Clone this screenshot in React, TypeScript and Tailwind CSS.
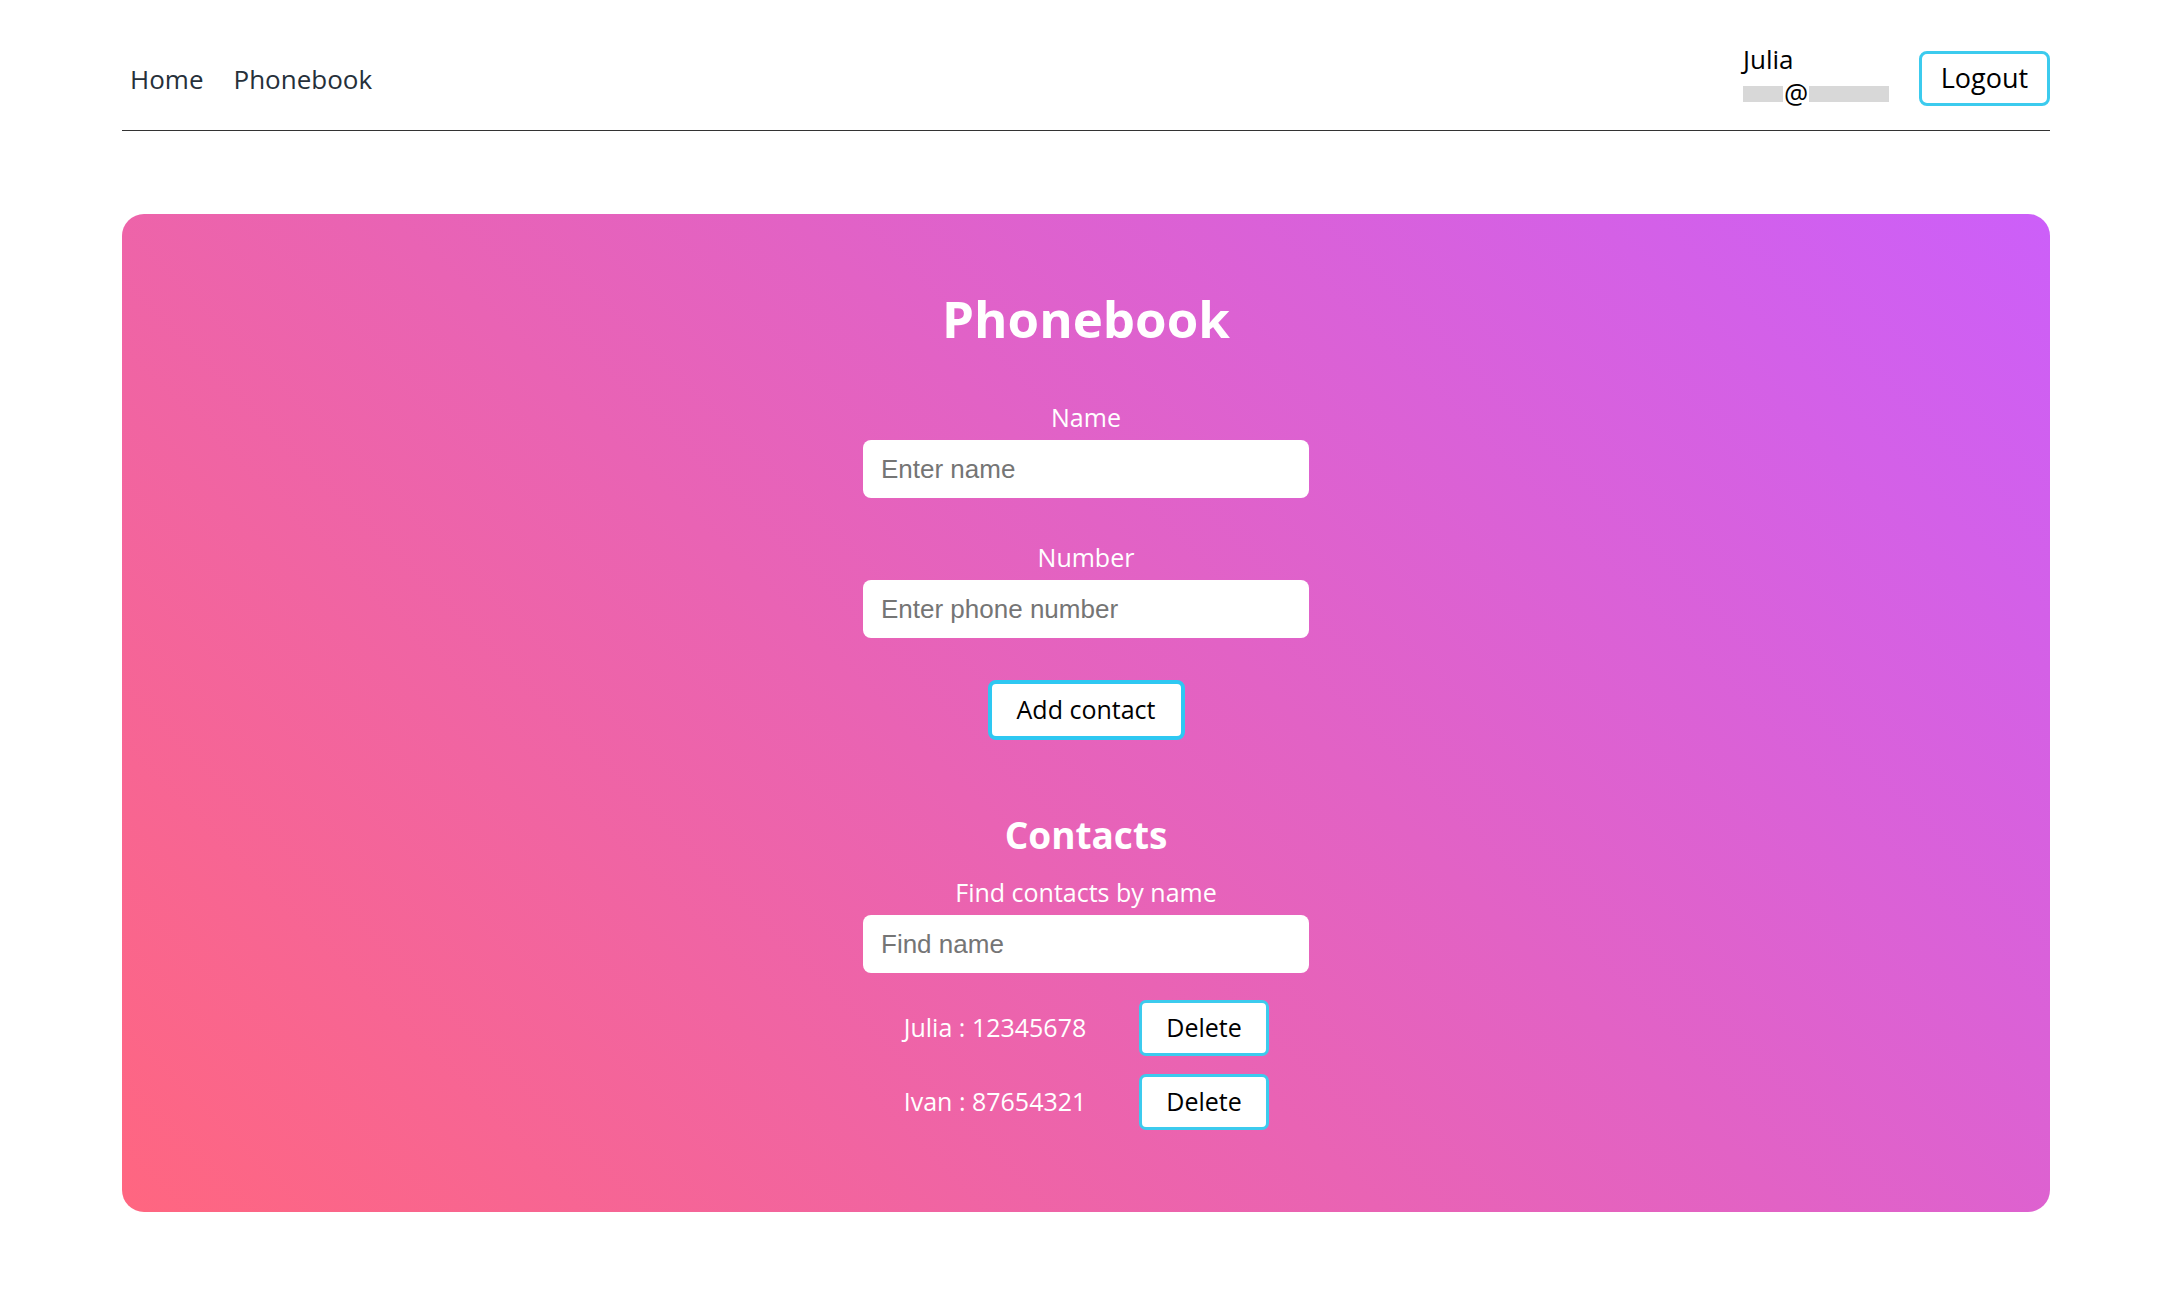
import React from "react";

const sans = { fontFamily: '"Open Sans", "Noto Sans", sans-serif' };
const arial = { fontFamily: '"Liberation Sans", Arial, sans-serif' };

export default function App() {
  const contacts = [
    { name: "Julia", number: "12345678" },
    { name: "Ivan", number: "87654321" },
  ];
  return (
    <div className="min-h-[1307px] bg-white" style={sans}>
      <div className="ml-[122px] w-[1928px]">
        <header className="flex h-[131px] items-center justify-between border-b border-[#333333] pt-[27px]">
          <nav className="flex items-center gap-[30px] pl-[8px] text-[26px] leading-none text-[#26303a]">
            <a className="font-normal">Home</a>
            <a className="font-normal">Phonebook</a>
          </nav>
          <div className="flex items-center gap-[26px]">
            <div className="flex w-[150px] flex-col text-[26px] leading-[32px] text-black">
              <span className="-mt-[6px]">Julia</span>
              <span className="mt-[5px] flex items-center">
                <span className="inline-block h-[16px] w-[40px] bg-[#d8d8d8]" />
                <span className="px-[1px] text-[27px] leading-[28px]">@</span>
                <span className="inline-block h-[16px] w-[80px] bg-[#d8d8d8]" />
              </span>
            </div>
            <button className="flex h-[55px] w-[131px] items-center justify-center rounded-[8px] border-[3px] border-[#3ccbee] bg-white text-[27px] text-black">
              Logout
            </button>
          </div>
        </header>

        <main className="mt-[83px] flex h-[998px] flex-col items-center rounded-[22px] bg-[linear-gradient(45deg,#ff6680,#cc5ff9)] pt-[79px] text-white">
          <h1 className="text-[51px] font-bold leading-none">Phonebook</h1>

          <label className="mt-[61px] text-[25px] leading-none">Name</label>
          <input
            className="mt-[10px] h-[58px] w-[446px] rounded-[8px] bg-white px-[18px] text-[26px] text-black outline-none placeholder:text-[#757575]"
            style={arial}
            placeholder="Enter name"
          />

          <label className="mt-[47px] text-[25px] leading-none">Number</label>
          <input
            className="mt-[10px] h-[58px] w-[446px] rounded-[8px] bg-white px-[18px] text-[26px] text-black outline-none placeholder:text-[#757575]"
            style={arial}
            placeholder="Enter phone number"
          />

          <button className="mt-[42px] flex h-[60px] w-[197px] items-center justify-center rounded-[8px] border-[4px] border-[#2ec8f2] bg-white text-[25px] text-black">
            Add contact
          </button>

          <h2 className="mt-[76px] text-[37px] font-bold leading-none">Contacts</h2>
          <label className="mt-[27px] text-[25px] leading-none">Find contacts by name</label>
          <input
            className="mt-[10px] h-[58px] w-[446px] rounded-[8px] bg-white px-[18px] text-[26px] text-black outline-none placeholder:text-[#757575]"
            style={arial}
            placeholder="Find name"
          />

          <ul className="mt-[27px] flex flex-col gap-[18px]">
            {contacts.map((c) => (
              <li key={c.name} className="flex items-center gap-[52px]">
                <span className="w-[184px] whitespace-nowrap text-center text-[25px]">
                  {c.name} : {c.number}
                </span>
                <button className="flex h-[56px] w-[130px] items-center justify-center rounded-[7px] border-[3px] border-[#3ccbee] bg-white text-[25px] text-black">
                  Delete
                </button>
              </li>
            ))}
          </ul>
        </main>
      </div>
    </div>
  );
}
